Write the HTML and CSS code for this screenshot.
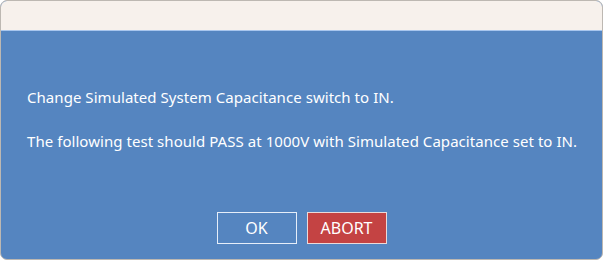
FILE: index.html
```html
<!DOCTYPE html>
<html lang="en">
<head>
    <meta charset="UTF-8">
    <title>Test Prompt</title>
    <link rel="stylesheet" href="styles.css">
</head>
<body>
    <div class="window">
        <div class="titlebar"></div>
        <div class="content">
            <div class="message">
                <p>Change Simulated System Capacitance switch to IN.</p>
                <p>The following test should PASS at 1000V with Simulated Capacitance set to IN.</p>
            </div>
            <div class="actions">
                <button class="btn btn-ok">OK</button>
                <button class="btn btn-abort">ABORT</button>
            </div>
        </div>
    </div>
</body>
</html>
```

FILE: styles.css
```css
html, body {
    margin: 0;
    padding: 0;
    height: 100%;
}
body {
    font-family: 'Noto Sans', 'Open Sans', sans-serif;
    background-color: #ffffff;
}
.window {
    box-sizing: border-box;
    width: 603px;
    height: 260px;
    display: flex;
    flex-direction: column;
    border: 1px solid #bdb8b2;
    border-radius: 7px;
    overflow: hidden;
    background-color: #5585c0;
}
.titlebar {
    height: 29px;
    background-color: #f7f1ec;
    border-bottom: 1px solid #a8c6ee;
}
.content {
    flex: 1;
    display: flex;
    flex-direction: column;
    padding: 0 10px 15px 26px;
}
.message {
    padding-top: 56px;
    color: #ffffff;
    font-size: 15px;
    letter-spacing: 0.05px;
}
.message p {
    margin: 0 0 23px;
    line-height: 21px;
}
.actions {
    margin-top: auto;
    display: flex;
    justify-content: center;
    gap: 10px;
    padding-right: 16px;
}
.btn {
    width: 80px;
    height: 32px;
    font-family: inherit;
    font-size: 16px;
    color: #ffffff;
    border: 1px solid #e6eef9;
    border-radius: 0;
    cursor: pointer;
}
.btn-ok {
    background-color: #5585c0;
}
.btn-abort {
    background-color: #c44343;
    border-color: #eadada;
}
```
